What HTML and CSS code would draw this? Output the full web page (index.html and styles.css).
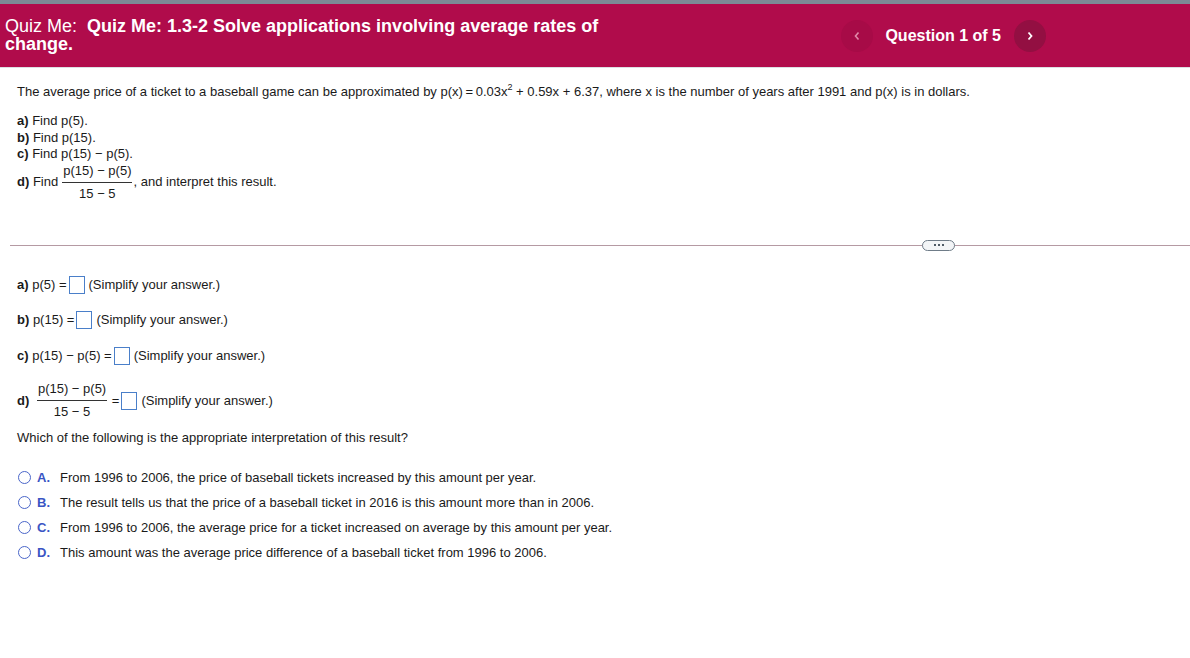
FILE: index.html
```html
<!DOCTYPE html>
<html>
<head>
<meta charset="utf-8">
<link rel="stylesheet" href="styles.css">
</head>
<body>
<div class="topline"></div>
<header class="hdr">
  <div class="title"><span class="lbl">Quiz Me:</span>&nbsp; <b>Quiz Me: 1.3-2 Solve applications involving average rates of change.</b></div>
  <div class="nav">
    <span class="circ prev"><svg width="8" height="10" viewBox="0 0 8 10"><path d="M5.5 1.5 L2.5 5 L5.5 8.5" fill="none" stroke="#e08aa8" stroke-width="1.6"/></svg></span>
    <span class="qnum">Question 1 of 5</span>
    <span class="circ next"><svg width="8" height="10" viewBox="0 0 8 10"><path d="M2.5 1.5 L5.5 5 L2.5 8.5" fill="none" stroke="#ffffff" stroke-width="1.8"/></svg></span>
  </div>
</header>
<main class="content">
  <p class="intro">The average price of a ticket to a baseball game can be approximated by p(x)&thinsp;=&thinsp;0.03x<sup>2</sup> + 0.59x + 6.37, where x is the number of years after 1991 and p(x) is in dollars.</p>
  <div class="parts">
    <div><b>a)</b> Find p(5).</div>
    <div><b>b)</b> Find p(15).</div>
    <div><b>c)</b> Find p(15) − p(5).</div>
    <div class="drow"><b>d)</b>&nbsp;Find <span class="frac"><span class="num">p(15) − p(5)</span><span class="den">15 − 5</span></span>, and interpret this result.</div>
  </div>
</main>
<div class="divider"><span class="more"><i></i><i></i><i></i></span></div>
<section class="answers">
  <div class="arow r1"><b>a)</b>&nbsp;p(5) =<span class="box"></span><span class="hint">(Simplify your answer.)</span></div>
  <div class="arow r2"><b>b)</b>&nbsp;p(15) =<span class="box"></span><span class="hint">(Simplify your answer.)</span></div>
  <div class="arow r3"><b>c)</b>&nbsp;p(15) − p(5) =<span class="box"></span><span class="hint">(Simplify your answer.)</span></div>
  <div class="arow r4"><b>d)</b>&nbsp;<span class="frac"><span class="num">p(15) − p(5)</span><span class="den">15 − 5</span></span>&nbsp;=<span class="box"></span><span class="hint">(Simplify your answer.)</span></div>
  <p class="which">Which of the following is the appropriate interpretation of this result?</p>
  <ul class="opts">
    <li><span class="radio"></span><span class="let">A.</span>From 1996 to 2006, the price of baseball tickets increased by this amount per year.</li>
    <li><span class="radio"></span><span class="let">B.</span>The result tells us that the price of a baseball ticket in 2016 is this amount more than in 2006.</li>
    <li><span class="radio"></span><span class="let">C.</span>From 1996 to 2006, the average price for a ticket increased on average by this amount per year.</li>
    <li><span class="radio"></span><span class="let">D.</span>This amount was the average price difference of a baseball ticket from 1996 to 2006.</li>
  </ul>
</section>
</body>
</html>
```
FILE: styles.css
```css
* { box-sizing: border-box; }
html, body { margin: 0; padding: 0; background: #fff; }
body { font-family: "Liberation Sans", Arial, sans-serif; font-size: 13px; color: #1a1a1a; }
.topline { height: 4px; background: #7c8a95; }
.hdr {
  height: 64px;
  background: #b00c4b;
  color: #fff;
  display: flex;
  align-items: flex-start;
  justify-content: space-between;
  border-bottom: 1px solid #dcdfe3;
}
.title {
  width: 640px;
  padding: 14px 0 0 5px;
  font-size: 18px;
  line-height: 17.5px;
}
.title .lbl { font-weight: normal; }
.nav {
  display: flex;
  align-items: center;
  margin: 16px 144px 0 0;
}
.circ {
  width: 32px; height: 32px; border-radius: 50%;
  display: flex; align-items: center; justify-content: center;
}
.prev { background: #a70b47; }
.next { background: #930f42; }
.qnum { font-weight: bold; font-size: 16px; margin: 0 13px 0 12px; }
.content { padding: 0 17px; }
.intro { margin: 16px 0 0; line-height: 15px; }
.intro sup { font-size: 9px; line-height: 0; position: relative; top: -1px; }
.parts { margin-top: 14px; line-height: 16.5px; }
.drow { display: flex; align-items: center; margin-top: 0; }
.frac { display: inline-flex; flex-direction: column; align-items: center; margin: 0 1px 0 4px; }
.frac .num { border-bottom: 1px solid #333; padding: 0 1px 3px; line-height: 16px; }
.frac .den { line-height: 16px; padding-top: 3px; }
.divider {
  margin: 43px 0 0 10px;
  height: 1px;
  background: #b59aa3;
  position: relative;
}
.more {
  position: absolute; left: 912px; top: -5px;
  width: 33px; height: 11px;
  border: 1px solid #6f7c88; border-radius: 6px; background: #f3f5f7;
  display: flex; align-items: center; justify-content: center; gap: 2px;
}
.more i { width: 2px; height: 2px; background: #4f5b66; display: block; }
.answers { padding: 0 17px; }
.arow { display: flex; align-items: center; height: 20px; }
.r1 { margin-top: 29px; }
.r2 { margin-top: 15px; }
.r3 { margin-top: 16px; }
.r4 { margin-top: 14px; height: 42px; }
.r4 .frac { margin-left: 4px; }
.box { width: 16px; height: 18px; border: 1px solid #4a7fc9; margin: 0 4px 0 2px; display: inline-block; }
.hint { color: #1a1a1a; }
.which { margin: 8px 0 0; line-height: 15px; }
.opts { list-style: none; margin: 20px 0 0; padding: 0; }
.opts li { display: flex; align-items: center; height: 25px; }
.radio { width: 13px; height: 13px; border: 1.5px solid #4a66c9; border-radius: 50%; margin: 0 6px 0 1px; }
.let { color: #3a55c4; font-weight: bold; width: 23px; }
```
